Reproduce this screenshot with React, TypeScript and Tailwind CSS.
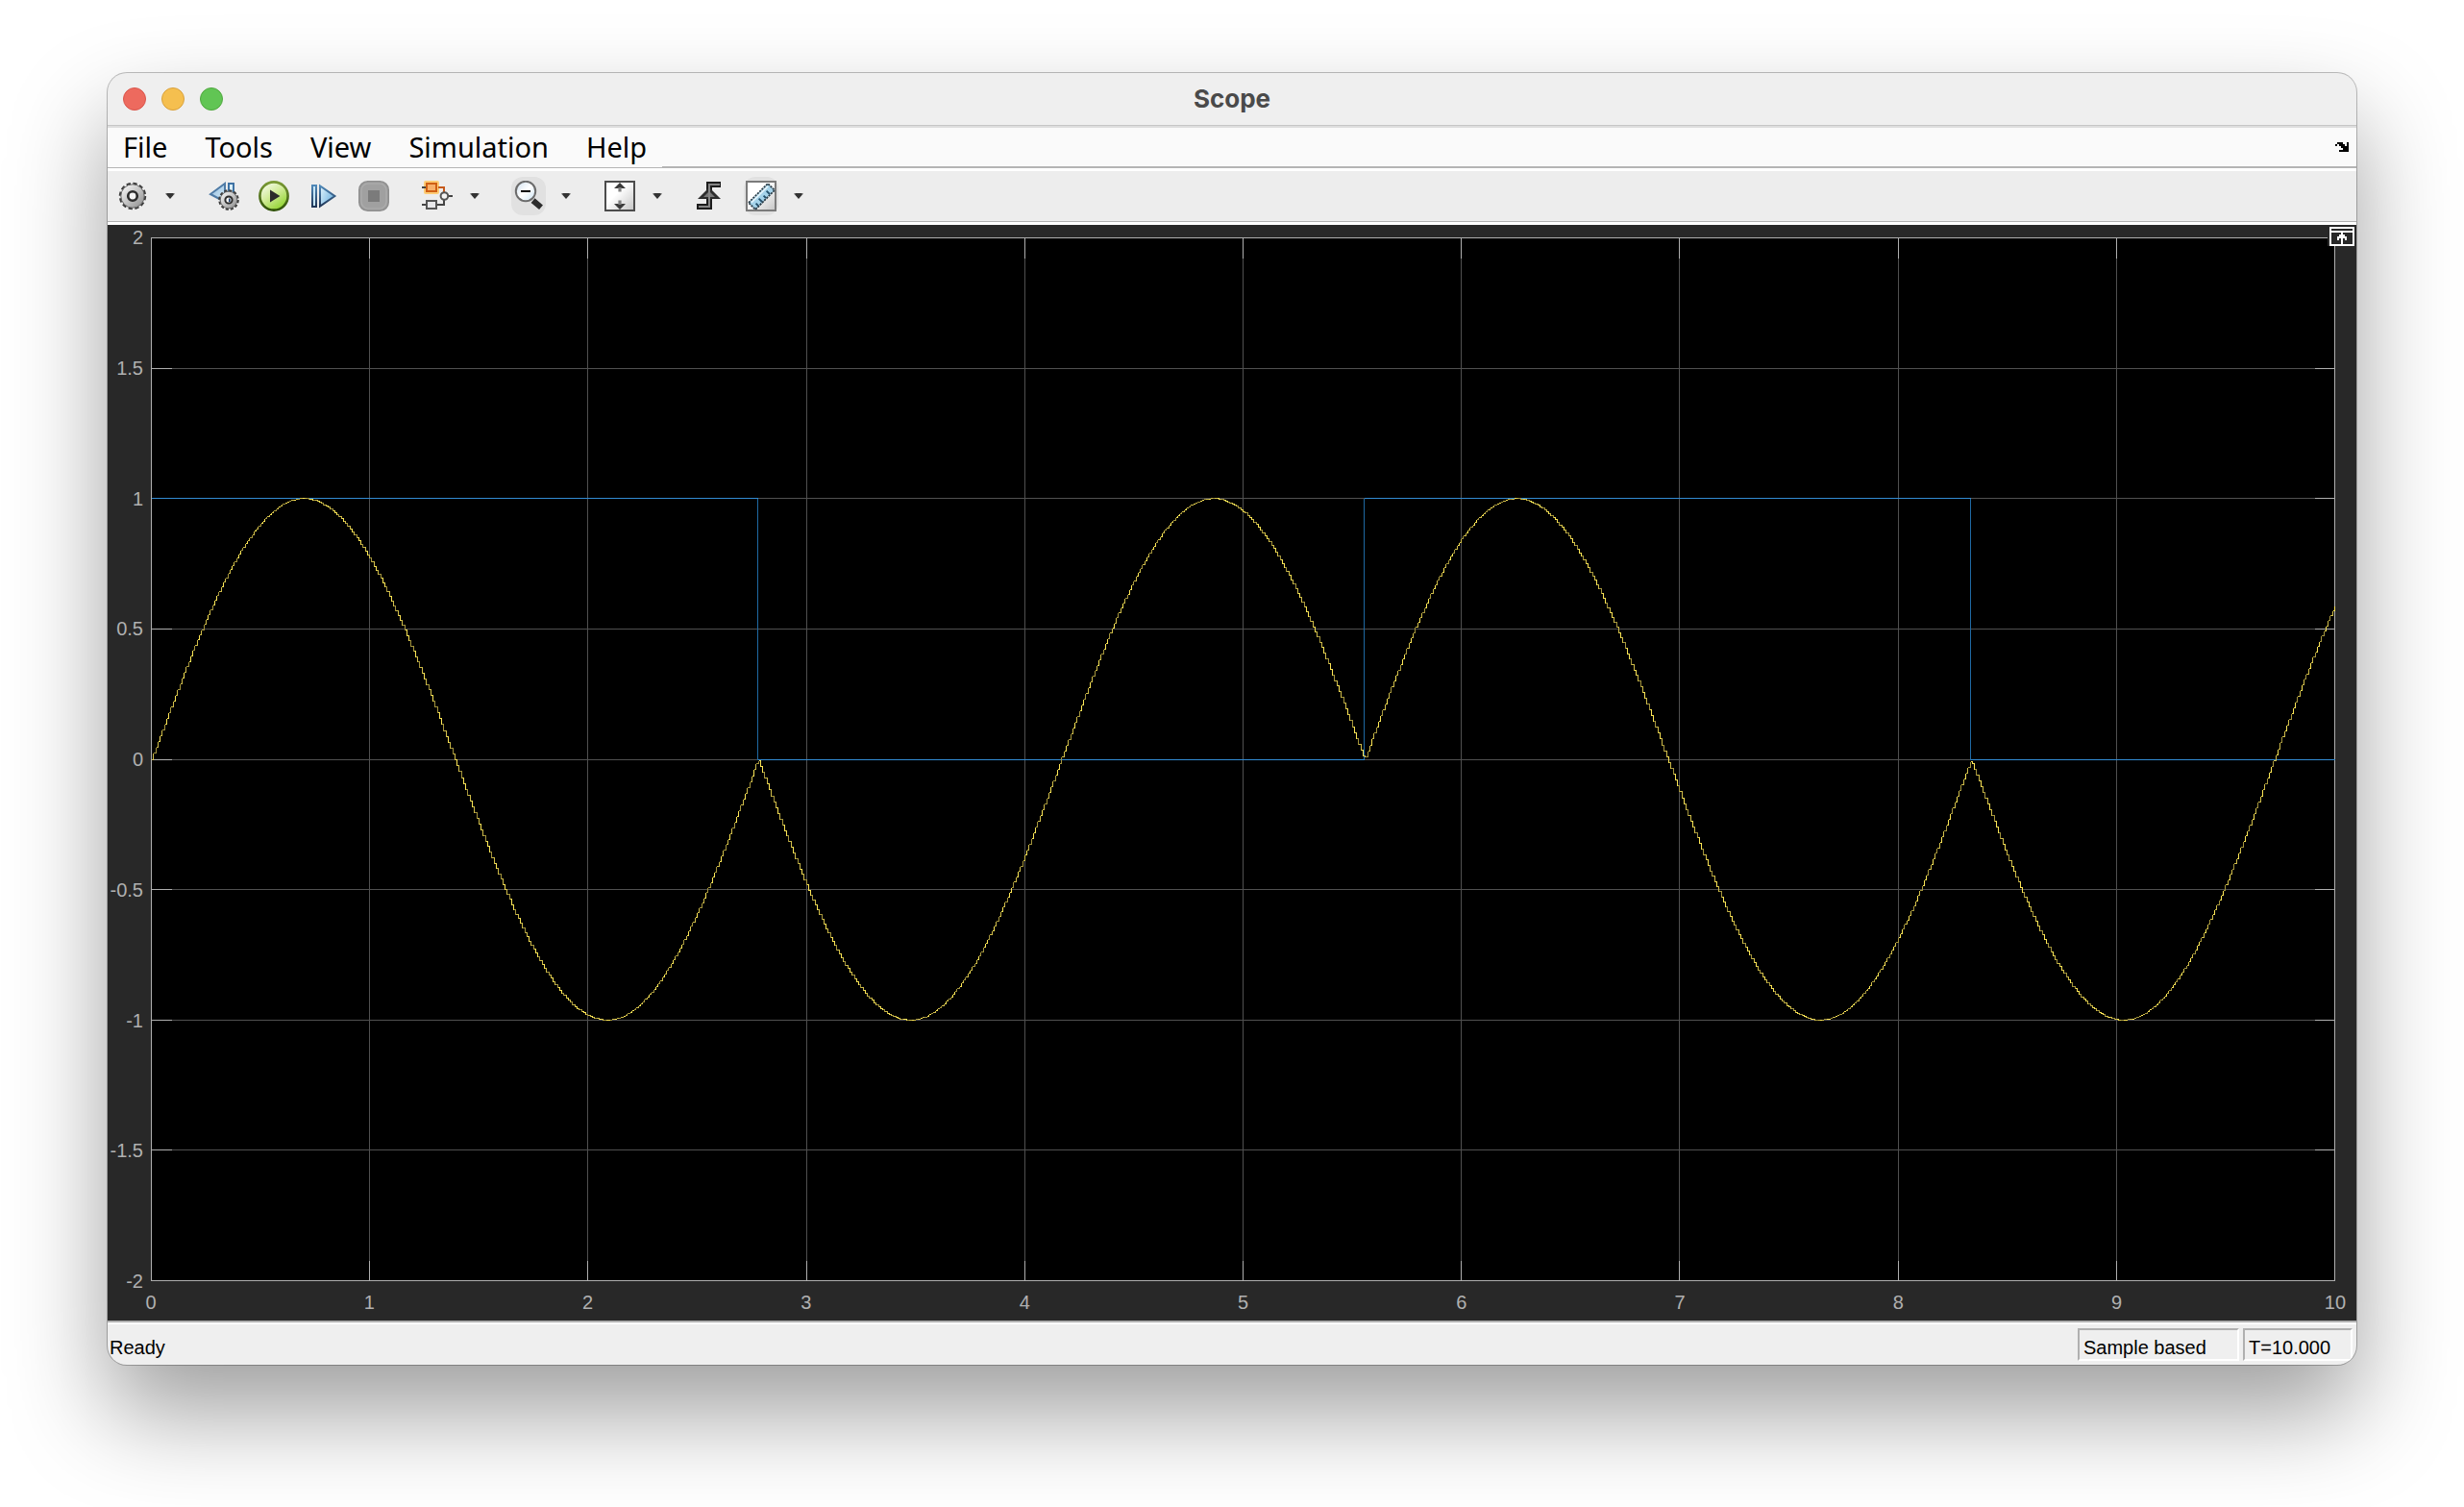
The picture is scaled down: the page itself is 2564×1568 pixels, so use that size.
import React from "react";

/* ---------- signal data ---------- */

const T_END = 10;
const STEPS = 1000;
const HALF = 25 / 9;
const W = 2272;
const H = 1085;

const toX = (t: number) => (t / T_END) * W;
const toY = (v: number) => ((2 - v) / 4) * H;
const gridX = (t: number) => Math.round(toX(t));
const gridY = (v: number) => Math.round(toY(v));

const squareAt = (t: number) => (Math.floor(t / HALF + 1e-9) % 2 === 0 ? 1 : 0);
const sineAt = (t: number) =>
  (squareAt(t) === 1 ? 1 : -1) * Math.sin((2 * Math.PI * t) / HALF);

const SHADES = ["#fbe455", "#cfbc49", "#a3943c"];

function buildSine(): string[] {
  const paths = ["", "", ""];
  for (let i = 0; i < STEPS; i++) {
    const x0 = Math.round(toX((i * T_END) / STEPS));
    const exact = toX(((i + 1) * T_END) / STEPS);
    const x1 = Math.round(exact);
    const y0 = Math.round(toY(sineAt((i * T_END) / STEPS)));
    const y1 = Math.round(toY(sineAt(((i + 1) * T_END) / STEPS)));
    const off = Math.abs(exact - x1);
    const shade = off < 0.18 ? 0 : off < 0.36 ? 1 : 2;
    paths[shade] += `M${x0} ${y0}H${x1}V${y1}`;
  }
  return paths;
}

const SINE = buildSine();
const HIGH = gridY(1);
const LOW = gridY(0);
const SQUARE = `M0 ${HIGH}H${gridX(HALF)}M${gridX(HALF)} ${LOW}H${gridX(2 * HALF)}M${gridX(2 * HALF)} ${HIGH}H${gridX(3 * HALF)}M${gridX(3 * HALF)} ${LOW}H${W}`;
const SQUARE_EDGES = [1, 2, 3].map((k) => `M${gridX(k * HALF)} ${HIGH}V${LOW}`).join("");

const X_LABELS = [0, 1, 2, 3, 4, 5, 6, 7, 8, 9, 10];
const Y_LABELS = ["2", "1.5", "1", "0.5", "0", "-0.5", "-1", "-1.5", "-2"];

const TICK = 21;
const INNER_X = X_LABELS.slice(1, -1).map(gridX);
const INNER_Y = Y_LABELS.slice(1, -1).map((v) => gridY(Number(v)));
const GRID = [...INNER_X.map((x) => `M${x} 0V${H}`), ...INNER_Y.map((y) => `M0 ${y}H${W}`)].join("");
const TICKS = [
  ...INNER_X.map((x) => `M${x} 0v${TICK}M${x} ${H}v-${TICK}`),
  ...INNER_Y.map((y) => `M0 ${y}h${TICK}M${W} ${y}h-${TICK}`),
].join("");

function Plot() {
  const p = { fill: "none", strokeWidth: 1, vectorEffect: "non-scaling-stroke" as const };
  return (
    <svg
      className="block h-full w-full bg-black"
      viewBox={`-0.5 -0.5 ${W + 1} ${H + 1}`}
      preserveAspectRatio="none"
      shapeRendering="crispEdges"
      role="img"
      aria-label="Sine wave and pulse signals over ten seconds"
    >
      <path d={GRID} stroke="#505050" {...p} />
      <path d={TICKS} stroke="#afafaf" {...p} />
      <rect x={0} y={0} width={W} height={H} stroke="#afafaf" {...p} />
      <path d={SQUARE_EDGES} stroke="#1f69a3" {...p} />
      <path d={SQUARE} stroke="#328bd2" {...p} />
      {SINE.map((d, i) => (
        <path key={i} d={d} stroke={SHADES[i]} {...p} />
      ))}
    </svg>
  );
}

/* ---------- icons, drawn on a 16 unit grid ---------- */

function Icon({ children }: { children: React.ReactNode }) {
  return (
    <svg className="size-8" viewBox="0 0 16 16" aria-hidden="true">
      {children}
    </svg>
  );
}

function Cog({ cx, cy, r, id }: { cx: number; cy: number; r: number; id: string }) {
  return (
    <g>
      <defs>
        <linearGradient id={id} x1="0" y1="0" x2="1" y2="1">
          <stop offset="0" stopColor="#ffffff" />
          <stop offset="1" stopColor="#8a8a8a" />
        </linearGradient>
      </defs>
      <circle cx={cx} cy={cy} r={r - 0.5} fill="none" stroke="#3c3c3c" strokeWidth="1.2" strokeDasharray={`${(r - 0.5) * 0.33} ${(r - 0.5) * 0.1933}`} />
      <circle cx={cx} cy={cy} r={r - 0.9} fill={`url(#${id})`} stroke="#666" strokeWidth="0.5" />
      <circle cx={cx} cy={cy} r={r * 0.34} fill="#f4f4f4" stroke="#2c2c2c" strokeWidth={r * 0.19} />
    </g>
  );
}

const GearIcon = () => (
  <Icon>
    <Cog cx={8} cy={8} r={7} id="cog-a" />
  </Icon>
);

const StepBackIcon = () => (
  <Icon>
    <defs>
      <linearGradient id="back-a" x1="0" y1="0" x2="1" y2="1">
        <stop offset="0" stopColor="#8fb9dc" />
        <stop offset="1" stopColor="#d8eefa" />
      </linearGradient>
    </defs>
    <path d="M8.500 1.500V11L1 7Z" fill="url(#back-a)" stroke="#4f7ba6" strokeWidth="1" />
    <path d="M10.500 1.500h2.500v6h-2.500z" fill="#d8eefa" stroke="#3f73a4" strokeWidth="1" />
    <Cog cx={10.5} cy={10} r={5.3} id="cog-b" />
    <path d="M10.500 9.200h.8v1.800h-.8z" fill="#1d3c66" />
  </Icon>
);

const PlayIcon = () => (
  <Icon>
    <defs>
      <linearGradient id="play-a" x1="0" y1="0" x2="0.7" y2="1">
        <stop offset="0" stopColor="#ffffff" />
        <stop offset="0.5" stopColor="#d3ec9c" />
        <stop offset="1" stopColor="#8fd32e" />
      </linearGradient>
      <linearGradient id="play-b" x1="0" y1="0" x2="0" y2="1">
        <stop offset="0" stopColor="#7a9a34" />
        <stop offset="1" stopColor="#2f5208" />
      </linearGradient>
    </defs>
    <circle cx="8" cy="8" r="7.3" fill="url(#play-a)" stroke="url(#play-b)" strokeWidth="1.3" />
    <path d="M6 4.8V11.2L11.2 8Z" fill="#2b2b2b" />
  </Icon>
);

const StepForwardIcon = () => (
  <Icon>
    <defs>
      <linearGradient id="fwd-a" x1="0" y1="0" x2="1" y2="0.6">
        <stop offset="0" stopColor="#e4f5fd" />
        <stop offset="1" stopColor="#6fb2df" />
      </linearGradient>
      <linearGradient id="fwd-b" x1="0" y1="0" x2="0" y2="1">
        <stop offset="0" stopColor="#4f88b8" />
        <stop offset="1" stopColor="#1f3556" />
      </linearGradient>
    </defs>
    <path d="M2 2.500h2v11h-2z" fill="#c8e6f6" stroke="url(#fwd-b)" strokeWidth="1" />
    <path d="M6 2.700V13.300L13.700 8Z" fill="url(#fwd-a)" stroke="url(#fwd-b)" strokeWidth="1" />
  </Icon>
);

const StopIcon = () => (
  <Icon>
    <rect x="0.4" y="0.4" width="15.2" height="15.2" rx="4.4" fill="#a0a0a0" stroke="#8f8f8f" strokeWidth="0.8" />
    <rect x="1.5" y="1.5" width="13" height="13" rx="3.6" fill="none" stroke="#adadad" strokeWidth="0.6" />
    <rect x="5" y="5" width="6" height="6" fill="#7b7b7b" />
  </Icon>
);

const HighlightIcon = () => (
  <Icon>
    <rect x="1" y="0" width="8" height="7" rx="1" fill="#fdcb74" />
    <path d="M0 3.500h2" stroke="#444" />
    <path d="M8.500 3.500h3v3.500" fill="none" stroke="#c65a1c" />
    <rect x="2.500" y="1.500" width="5" height="4" fill="#f7b06a" stroke="#cf5f14" />
    <path d="M0 12.500h2M8 12.500h3.500v-3M14 8h2" fill="none" stroke="#444" />
    <rect x="2.500" y="10.500" width="5" height="4" fill="#e8e8ea" stroke="#555" />
    <circle cx="11.700" cy="8" r="1.900" fill="#f4f4f4" stroke="#555" />
  </Icon>
);

const ZoomOutIcon = () => (
  <Icon>
    <defs>
      <linearGradient id="lens" x1="0" y1="0" x2="1" y2="1">
        <stop offset="0" stopColor="#cfe0ee" />
        <stop offset="0.5" stopColor="#ffffff" />
        <stop offset="1" stopColor="#c9e2f2" />
      </linearGradient>
    </defs>
    <path d="M10.300 10.300L14.500 13.900" stroke="#2c2c2c" strokeWidth="3" />
    <circle cx="6.500" cy="5.500" r="5.100" fill="url(#lens)" stroke="#6c6c6c" strokeWidth="1" />
    <path d="M4 5.500h5" stroke="#000" strokeWidth="1" />
  </Icon>
);

const AutoscaleIcon = () => (
  <Icon>
    <defs>
      <linearGradient id="pane" x1="0" y1="0" x2="1" y2="1">
        <stop offset="0.4" stopColor="#ffffff" />
        <stop offset="1" stopColor="#c4c4c4" />
      </linearGradient>
    </defs>
    <rect x="0.500" y="0.500" width="15" height="15" fill="url(#pane)" stroke="#4c4c4c" />
    <path d="M8 1L11 4H5ZM8 15L11 12H5Z" fill="#3a3a3a" />
    <path d="M7.200 3.500h1.600v2.300H7.200zM7.200 10.200h1.600v2.300H7.200z" fill="#808080" />
  </Icon>
);

const TriggerIcon = () => (
  <Icon>
    <path d="M0.500 13.500h6.500v-11.500h6" fill="none" stroke="#1d1d1d" strokeWidth="3" />
    <path d="M1 9.500L7 3.500L13 9.500Z" fill="#2d2d2d" />
    <path d="M4 8.500L7 5.500L10 8.500Z" fill="#777" />
    <path d="M1.500 13.500h5.500v-11.500h5.500" fill="none" stroke="#858585" strokeWidth="1" />
  </Icon>
);

const RulerIcon = () => (
  <Icon>
    <rect x="0.500" y="0.500" width="15" height="15" fill="url(#pane)" stroke="#7b7b7b" />
    <path d="M1.500 11.500L11.500 1.500L15 5L5 15Z" fill="#a5d3ea" stroke="#2b3d48" strokeWidth="0.900" strokeDasharray="1.100 0.500" />
    <path d="M6.500 13L5.300 11.800M8.500 11L6.800 9.300M10.500 9L9.300 7.800M12.500 7L10.800 5.300" stroke="#24506c" strokeWidth="0.900" />
    <path d="M3 11.300L11.500 2.900" stroke="#e2f3fb" strokeWidth="0.900" />
  </Icon>
);

/* ---------- toolbar parts ---------- */

function ToolButton({ label, raised, children }: { label: string; raised?: boolean; children: React.ReactNode }) {
  return (
    <button
      type="button"
      aria-label={label}
      className={
        raised
          ? "flex h-10 w-9 items-center justify-center rounded-xl bg-[#e1e1e1]"
          : "flex h-10 w-9 items-center justify-center"
      }
    >
      {children}
    </button>
  );
}

function DropArrow({ label }: { label: string }) {
  return (
    <button type="button" aria-label={label} className="ml-[13px] flex h-10 w-4 items-center justify-center">
      <svg className="h-1.5 w-2.5" viewBox="0 0 10 6" aria-hidden="true">
        <path d="M0 0h10L9 2H1z" fill="#8a8a8a" />
        <path d="M1.500 0h7v2L5 6L1.500 2z" fill="#333" />
      </svg>
    </button>
  );
}

const Group = ({ children }: { children: React.ReactNode }) => <div className="flex items-center">{children}</div>;

const MENUS = ["File", "Tools", "View", "Simulation", "Help"];

export default function App() {
  return (
    <div className="flex min-h-screen bg-white px-28 pt-[76px] pb-[148px] font-['Liberation_Sans',sans-serif] text-xl leading-6 text-black">
      <div className="flex min-w-0 flex-1 flex-col overflow-hidden rounded-[20px] bg-[#efefef] shadow-[0_0_0_1px_rgba(0,0,0,0.25),0_50px_100px_rgba(0,0,0,0.38)]">
        <header className="grid h-[55px] grid-cols-3 items-center border-b border-[#c6c6c6] px-4">
          <div className="flex gap-4">
            <button type="button" aria-label="Close" className="size-6 rounded-full border border-[#d9554b] bg-[#ed6a5e]" />
            <button type="button" aria-label="Minimize" className="size-6 rounded-full border border-[#d8a03c] bg-[#f5bf4f]" />
            <button type="button" aria-label="Zoom" className="size-6 rounded-full border border-[#50a73f] bg-[#61c554]" />
          </div>
          <h1 className="text-center font-['Inter',sans-serif] text-[26px] leading-8 font-bold text-[#4a4a4a]">Scope</h1>
        </header>

        <div className="flex h-11 border-t-2 border-[#dedede] bg-[#fafafa]">
          <nav className="flex items-center gap-[39px] border-b border-[#b4b4b4] pr-4 pb-0.5 pl-4 font-['Noto_Sans',sans-serif] text-[29px] leading-8">
            {MENUS.map((m) => (
              <button type="button" key={m}>
                {m}
              </button>
            ))}
          </nav>
          <div className="flex flex-1 items-center justify-end border-b-2 border-[#b4b4b4] pr-2">
            <button type="button" aria-label="Dock window">
              <svg className="h-2.5 w-3.5" viewBox="0 0 7 5" shapeRendering="crispEdges" aria-hidden="true">
                <path d="M1 0h3v1H1zM6 0h1v5H2V4h2V3H3V2H2V1h3v1h1zM0 1h1v1H0z" />
              </svg>
            </button>
          </div>
        </div>

        <div
          role="toolbar"
          aria-label="Scope tools"
          className="flex h-14 items-center gap-[30px] border-t-3 border-b border-t-white border-b-[#b0b0b0] bg-[#ededed] pl-2"
        >
          <Group>
            <ToolButton label="Configuration properties"><GearIcon /></ToolButton>
            <DropArrow label="Configuration options" />
          </Group>
          <div className="flex items-center gap-4">
            <ToolButton label="Stepping options"><StepBackIcon /></ToolButton>
            <ToolButton label="Run"><PlayIcon /></ToolButton>
            <ToolButton label="Step forward"><StepForwardIcon /></ToolButton>
            <ToolButton label="Stop"><StopIcon /></ToolButton>
          </div>
          <Group>
            <ToolButton label="Highlight block"><HighlightIcon /></ToolButton>
            <DropArrow label="Highlight options" />
          </Group>
          <Group>
            <ToolButton label="Zoom out" raised><ZoomOutIcon /></ToolButton>
            <DropArrow label="Zoom options" />
          </Group>
          <Group>
            <ToolButton label="Scale axes"><AutoscaleIcon /></ToolButton>
            <DropArrow label="Scale options" />
          </Group>
          <Group>
            <div className="flex items-center gap-4">
              <ToolButton label="Triggers"><TriggerIcon /></ToolButton>
              <ToolButton label="Cursor measurements" raised><RulerIcon /></ToolButton>
            </div>
            <DropArrow label="Measurement options" />
          </Group>
        </div>

        <main className="relative grid flex-1 grid-cols-[45px_1fr_22px] grid-rows-[13px_1fr_41px] border-t-3 border-white bg-[#282828] text-xl text-[#b0b0b0]">
          <div className="col-start-1 row-start-2 flex flex-col justify-between pr-2 text-right">
            {Y_LABELS.map((v) => (
              <div key={v} className="flex h-0 items-center justify-end">
                {v}
              </div>
            ))}
          </div>
          <div className="col-start-2 row-start-2 min-h-0">
            <Plot />
          </div>
          <div className="col-start-2 row-start-3 flex justify-between pt-2">
            {X_LABELS.map((v) => (
              <div key={v} className="flex w-0 justify-center">
                {v}
              </div>
            ))}
          </div>
          <button type="button" aria-label="Maximize axes" className="absolute top-0.5 right-0.5 bg-[#282828] pl-0.5">
            <svg className="h-5 w-[26px]" viewBox="0 0 13 10" shapeRendering="crispEdges" aria-hidden="true">
              <path d="M.5.5h12v9H.5zM1 2.500h11" fill="none" stroke="#fff" />
              <path d="M6 3h1v1h1v1h1v2H8V6H7v3H6V6H5v1H4V5h1V4h1z" fill="#fff" />
            </svg>
          </button>
        </main>

        <footer className="flex h-[46px] items-start gap-1 border-t-2 border-[#b0b0b0] pr-1 pl-0.5 inset-shadow-[0_2px_0_#ffffff]">
          <p className="flex-1 pt-3.5">Ready</p>
          <p className="mt-1.5 h-[34px] w-[168px] border-2 border-t-[#b0b0b0] border-r-white border-b-white border-l-[#b0b0b0] px-1 pt-1.5">
            Sample based
          </p>
          <p className="mt-1.5 h-[34px] w-[114px] border-2 border-t-[#b0b0b0] border-r-white border-b-white border-l-[#b0b0b0] px-1 pt-1.5">
            T=10.000
          </p>
        </footer>
      </div>
    </div>
  );
}
